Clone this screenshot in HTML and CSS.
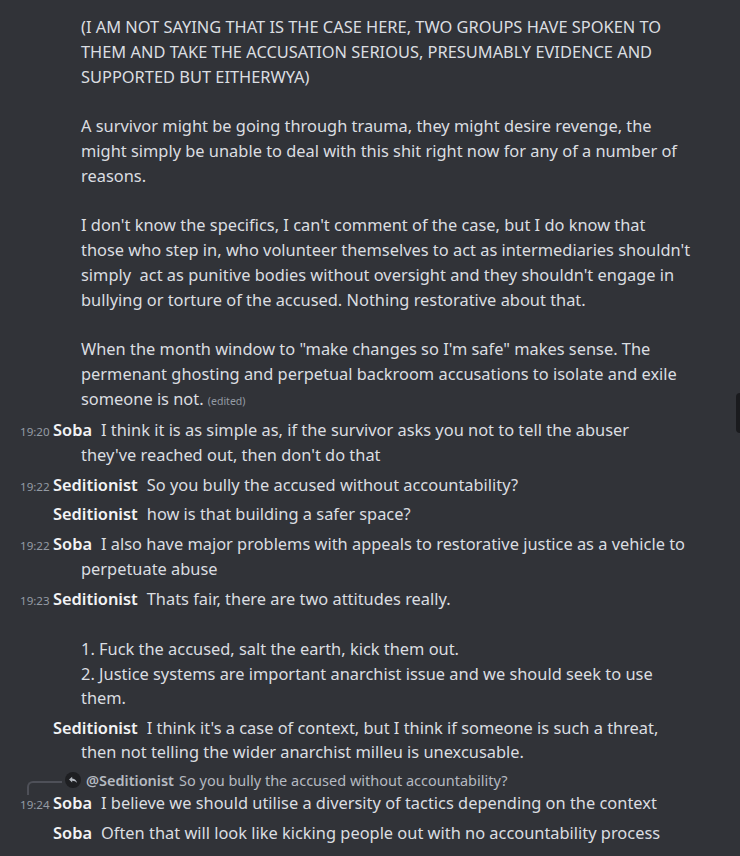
FILE: index.html
```html
<!DOCTYPE html>
<html lang="en">
<head>
    <meta charset="UTF-8">
    <meta name="viewport" content="width=device-width, initial-scale=1.0">
    <title>chat</title>
    <link rel="stylesheet" href="styles.css">
</head>
<body>
    <main class="chat">
        <div class="msg">
            <div class="line cont">(I AM NOT SAYING THAT IS THE CASE HERE, TWO GROUPS HAVE SPOKEN TO<br>THEM AND TAKE THE ACCUSATION SERIOUS, PRESUMABLY EVIDENCE AND<br>SUPPORTED BUT EITHERWYA)<br><br>A survivor might be going through trauma, they might desire revenge, the<br>might simply be unable to deal with this shit right now for any of a number of<br>reasons.<br><br>I don't know the specifics, I can't comment of the case, but I do know that<br>those who step in, who volunteer themselves to act as intermediaries shouldn't<br>simply &nbsp;act as punitive bodies without oversight and they shouldn't engage in<br>bullying or torture of the accused. Nothing restorative about that.<br><br>When the month window to "make changes so I'm safe" makes sense. The<br>permenant ghosting and perpetual backroom accusations to isolate and exile<br>someone is not. <span class="edited">(edited)</span></div>
        </div>

        <div class="msg">
            <div class="line"><span class="time">19:20</span><span class="name">Soba</span><span class="body">I think it is as simple as, if the survivor asks you not to tell the abuser<br>they've reached out, then don't do that</span></div>
        </div>

        <div class="msg start">
            <div class="line"><span class="time">19:22</span><span class="name">Seditionist</span><span class="body">So you bully the accused without accountability?</span></div>
        </div>
        <div class="msg">
            <div class="line"><span class="time"></span><span class="name">Seditionist</span><span class="body">how is that building a safer space?</span></div>
        </div>

        <div class="msg start">
            <div class="line"><span class="time">19:22</span><span class="name">Soba</span><span class="body">I also have major problems with appeals to restorative justice as a vehicle to<br>perpetuate abuse</span></div>
        </div>

        <div class="msg start">
            <div class="line"><span class="time">19:23</span><span class="name">Seditionist</span><span class="body">Thats fair, there are two attitudes really.<br><br>1. Fuck the accused, salt the earth, kick them out.<br>2. Justice systems are important anarchist issue and we should seek to use<br>them.</span></div>
        </div>
        <div class="msg">
            <div class="line"><span class="time"></span><span class="name">Seditionist</span><span class="body">I think it's a case of context, but I think if someone is such a threat,<br>then not telling the wider anarchist milleu is unexcusable.</span></div>
        </div>

        <div class="msg start has-reply">
            <div class="reply">
                <span class="reply-icon">
                    <svg width="10" height="10" viewBox="0 0 24 24"><path fill="currentColor" d="M10 8.3V4L2.5 11l7.5 7v-4.4c5.2 0 8.9 1.7 11.5 5.4-1-5.3-4.3-10.6-11.5-10.7z"/></svg>
                </span>
                <span class="reply-name">@Seditionist</span>
                <span class="reply-text">So you bully the accused without accountability?</span>
            </div>
            <div class="line"><span class="time">19:24</span><span class="name">Soba</span><span class="body">I believe we should utilise a diversity of tactics depending on the context</span></div>
        </div>
        <div class="msg">
            <div class="line"><span class="time"></span><span class="name">Soba</span><span class="body">Often that will look like kicking people out with no accountability process</span></div>
        </div>
        <div class="msg">
            <div class="line"><span class="time"></span><span class="name">Soba</span><span class="body">but there are also situations where that is the last thing that will help anyone</span></div>
        </div>
    </main>
    <div class="scroll-thumb"></div>
</body>
</html>
```

FILE: styles.css
```css
*{
    margin: 0;
    padding: 0;
    box-sizing: border-box;
}
body{
    background-color: #313338;
    color: #dbdee1;
    font-family: "Noto Sans", "Open Sans", sans-serif;
    font-size: 16.4px;
    height: 856px;
    overflow: hidden;
    position: relative;
}
.chat{
    padding-top: 13px;
}
.msg{
    padding: 2.25px 0;
}
.msg.start{
    margin-top: 1px;
}
.line{
    padding-left: 81px;
    text-indent: -61px;
    line-height: 24.75px;
    white-space: nowrap;
}
.line.cont{
    text-indent: 0;
}
.time{
    display: inline-block;
    width: 33px;
    line-height: 1;
    text-indent: 0;
    font-size: 11.6px;
    color: #949ba4;
}
.name{
    color: #f2f3f5;
    font-weight: 600;
    margin-right: 9px;
}
.edited{
    font-size: 10.5px;
    color: #949ba4;
}
.has-reply{
    padding-top: 1px;
}
.reply{
    position: relative;
    margin-left: 65px;
    display: flex;
    align-items: center;
    gap: 5px;
    height: 22px;
    font-size: 14.5px;
    color: #b5bac1;
    white-space: nowrap;
}
.reply::before{
    content: "";
    position: absolute;
    left: -38px;
    top: 12px;
    width: 33px;
    height: 12px;
    border-left: 2px solid #4e5058;
    border-top: 2px solid #4e5058;
    border-top-left-radius: 6px;
}
.reply-icon{
    width: 16px;
    height: 16px;
    border-radius: 50%;
    background-color: #1e1f22;
    color: #b5bac1;
    display: flex;
    justify-content: center;
    align-items: center;
}
.reply-name{
    font-weight: 600;
}
.scroll-thumb{
    position: absolute;
    right: 0;
    top: 393px;
    width: 4px;
    height: 40px;
    border-radius: 4px 0 0 4px;
    background-color: #1a1b1e;
}
```
